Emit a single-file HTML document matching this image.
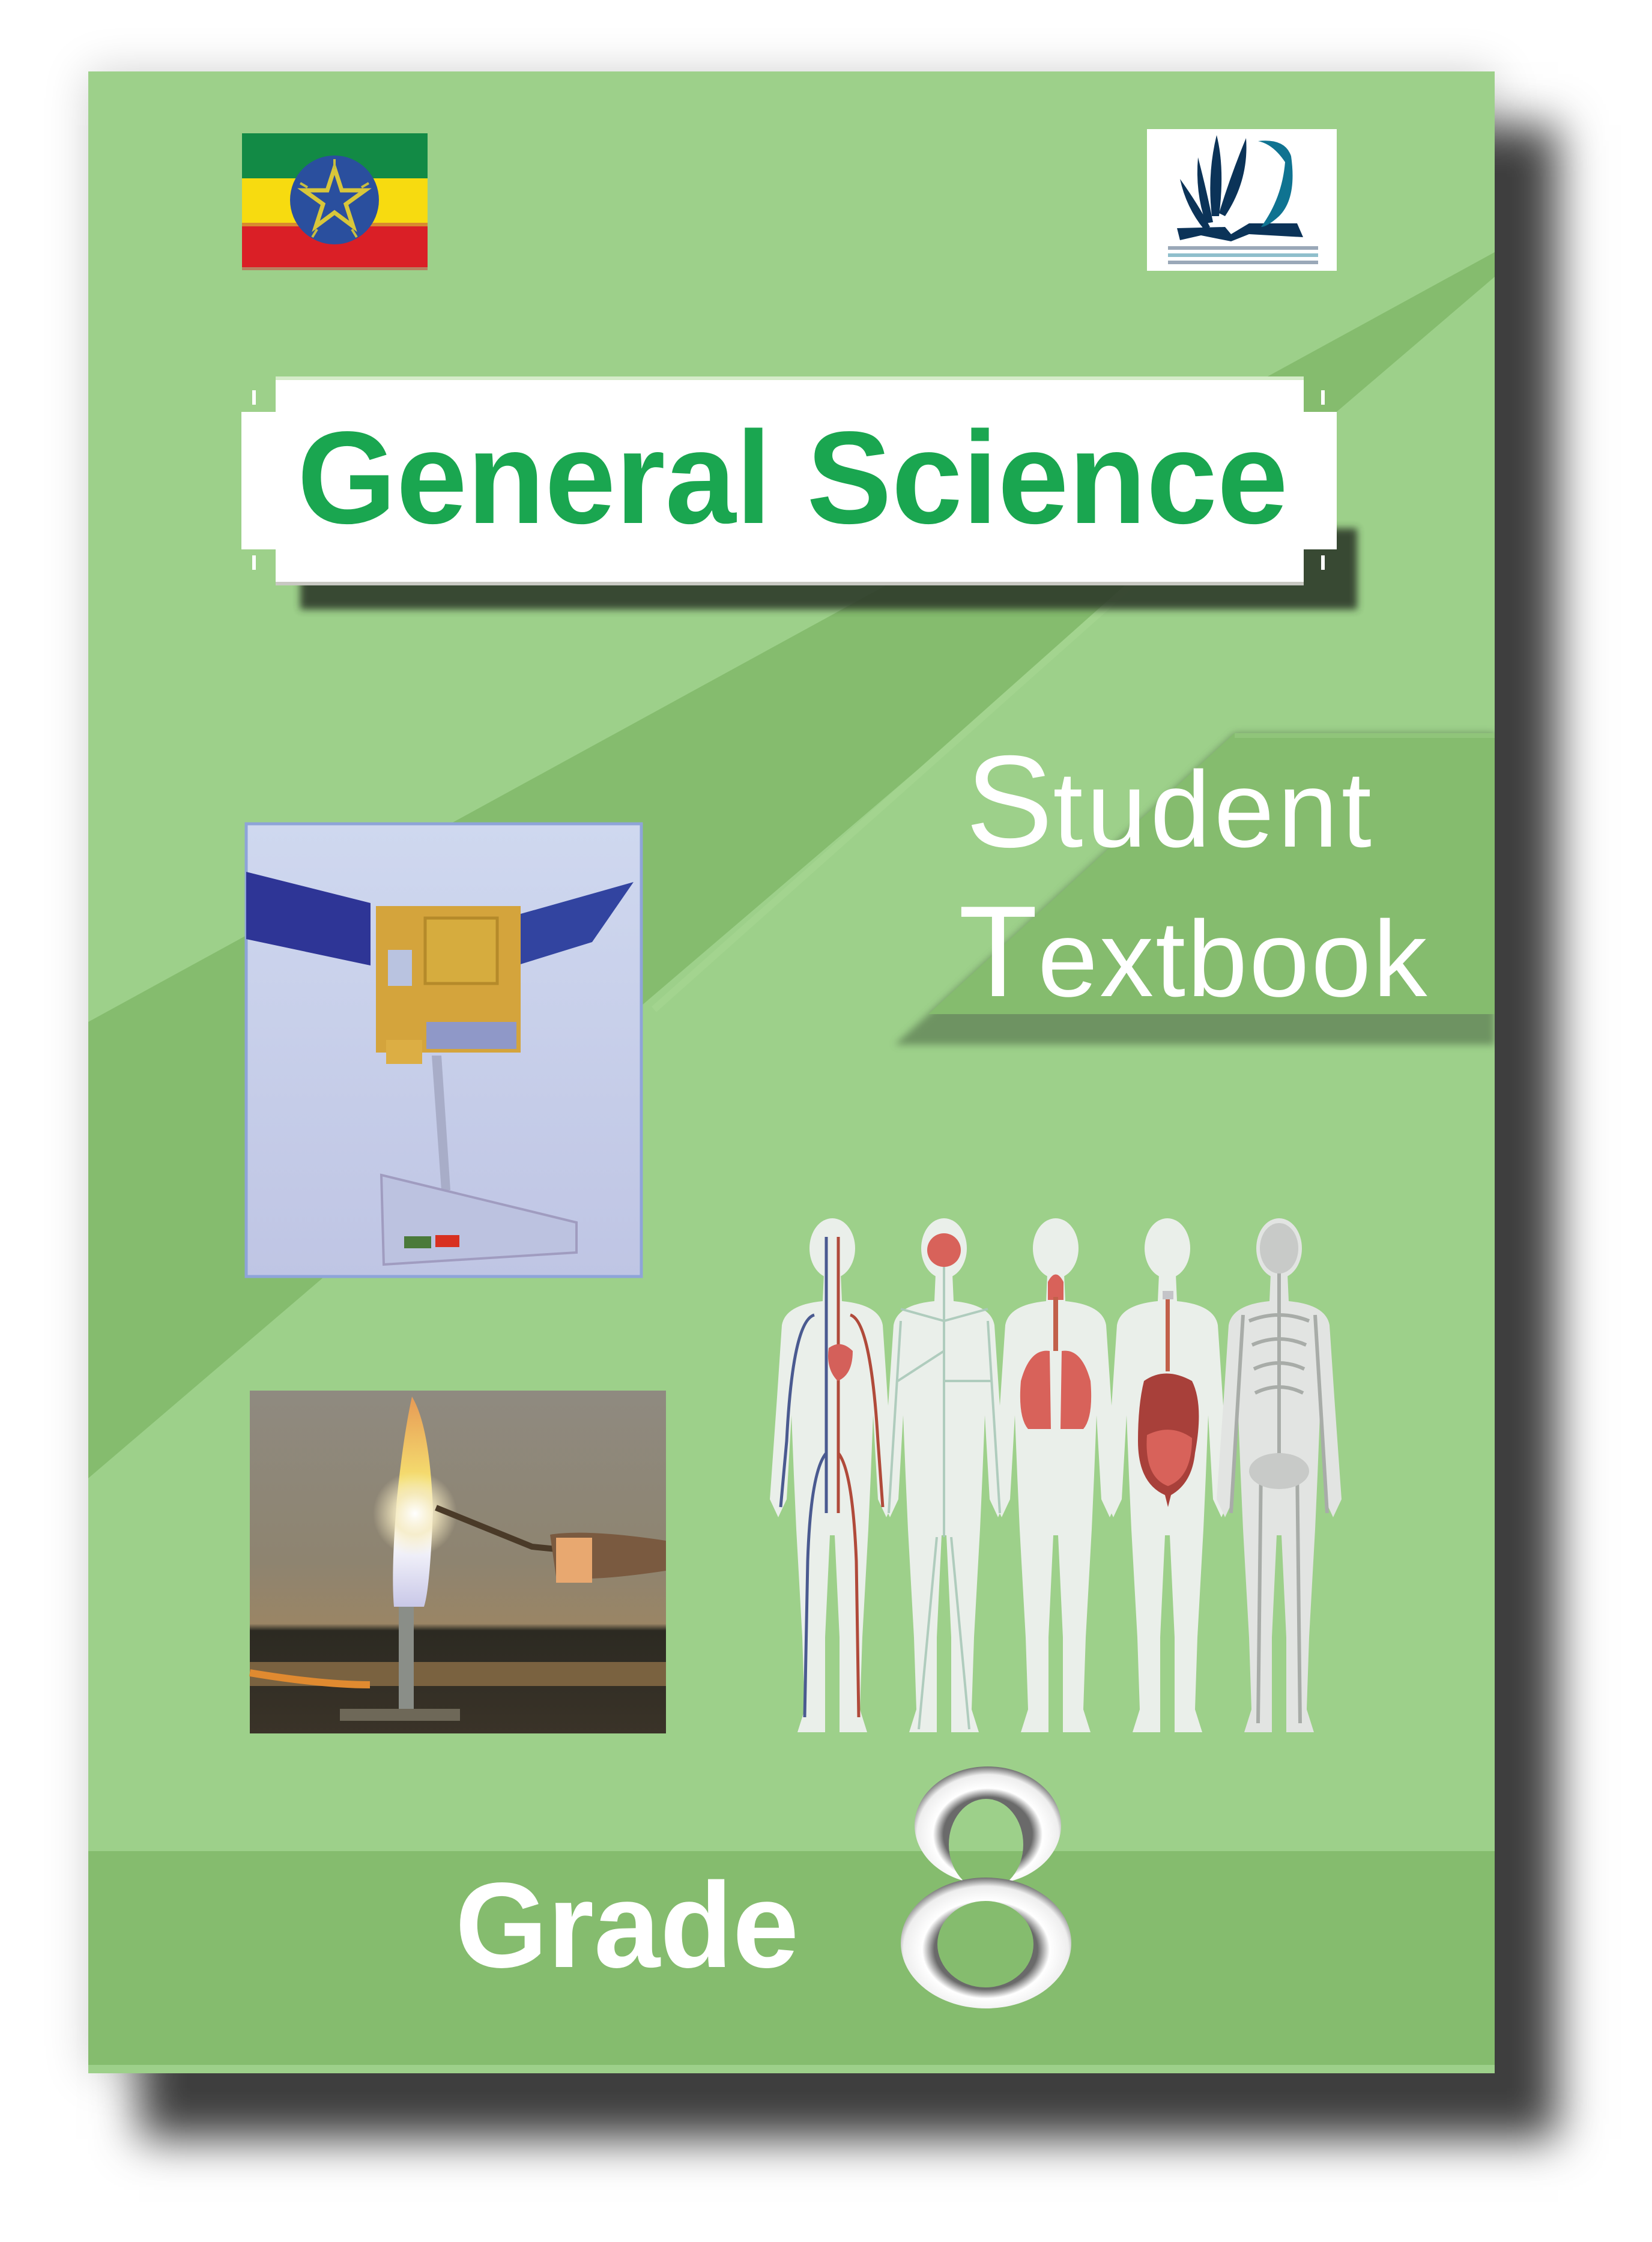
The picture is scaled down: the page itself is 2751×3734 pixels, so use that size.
<!DOCTYPE html>
<html><head><meta charset="utf-8">
<style>
html,body{margin:0;padding:0;background:#fff;}
body{width:2751px;height:3734px;position:relative;overflow:hidden;font-family:"Liberation Sans",Arial,sans-serif;}
#book{position:absolute;left:147px;top:119px;width:2342px;height:3334px;background:#9dd08a;
box-shadow:95px 100px 70px 10px #3e3e3e, 0 0 70px rgba(0,0,0,.18);overflow:hidden;}
svg{position:absolute;left:0;top:0;}
.t{position:absolute;white-space:nowrap;line-height:1;}
</style></head><body>
<div id="book">
<svg width="2342" height="3334" viewBox="147 119 2342 3334">
 <defs>
  <linearGradient id="fl" x1="0" y1="0" x2="0" y2="1">
   <stop offset="0" stop-color="#8f8a80"/><stop offset=".5" stop-color="#8e8470"/><stop offset=".68" stop-color="#9a8565"/><stop offset=".7" stop-color="#2c2a22"/><stop offset="1" stop-color="#3a3328"/>
  </linearGradient>
  <linearGradient id="sat" x1="0" y1="0" x2="0" y2="1"><stop offset="0" stop-color="#cfd8ef"/><stop offset="1" stop-color="#bfc5e4"/></linearGradient>
  <radialGradient id="glow" cx=".5" cy=".5" r=".5"><stop offset="0" stop-color="#fff"/><stop offset=".5" stop-color="#f4e9c0" stop-opacity=".8"/><stop offset="1" stop-color="#f4e9c0" stop-opacity="0"/></radialGradient>
  <linearGradient id="flame" x1="0" y1="0" x2="0" y2="1"><stop offset="0" stop-color="#e79a55"/><stop offset=".4" stop-color="#f5e070"/><stop offset=".65" stop-color="#fff"/><stop offset="1" stop-color="#c9c8e8"/></linearGradient>
  <radialGradient id="r8" cx=".5" cy=".55" r=".55"><stop offset=".55" stop-color="#6a6a6a"/><stop offset=".68" stop-color="#fff"/><stop offset=".88" stop-color="#eee"/><stop offset="1" stop-color="#707070"/></radialGradient>
  <filter id="bl"><feGaussianBlur stdDeviation="6"/></filter>
  <g id="body">
   <ellipse cx="100" cy="52" rx="38" ry="50"/>
   <path d="M86,95 L114,95 L116,140 Q178,146 184,180 L192,300 L204,470 L190,500 L176,470 L168,330 L164,430 L160,520 L150,700 L146,820 L158,858 L112,858 L112,700 L104,530 L96,530 L88,700 L88,858 L42,858 L54,820 L50,700 L40,520 L36,430 L32,330 L24,470 L10,500 L-4,470 L8,300 L16,180 Q22,146 84,140 Z"/>
  </g>
 </defs>
 <polygon points="2489,420 2489,461 147,2462 147,1702" fill="#85bc6e"/>
 <line x1="2000" y1="870" x2="1089" y2="1681" stroke="#a3d48f" stroke-width="12"/>
 <polygon points="2056,1221 2489,1221 2489,1740 1490,1740 1546,1689" fill="#5f7f55" opacity=".75" filter="url(#bl)"/>
 <polygon points="2056,1221 2489,1221 2489,1689 1546,1689" fill="#85bc6e"/>
 <rect x="2056" y="1221" width="433" height="8" fill="#90c57a"/>
 <rect x="147" y="3083" width="2342" height="356" fill="#85bc6e"/>
 <rect x="500" y="880" width="1760" height="135" fill="#2f3a2c" opacity=".9" filter="url(#bl)"/>
 <rect x="459" y="627" width="1712" height="348" fill="#fff"/>
 <rect x="402" y="686" width="1824" height="229" fill="#fff"/>
 <rect x="459" y="627" width="1712" height="6" fill="#d5ecc9"/>
 <rect x="459" y="969" width="1712" height="6" fill="#c8c8c2"/>
 <rect x="420" y="650" width="6" height="24" fill="#fff"/><rect x="2200" y="650" width="6" height="24" fill="#fff"/>
 <rect x="420" y="925" width="6" height="24" fill="#fff"/><rect x="2200" y="925" width="6" height="24" fill="#fff"/>
 <rect x="403" y="222" width="309" height="75" fill="#128a45"/>
 <rect x="403" y="297" width="309" height="74" fill="#f7db10"/>
 <rect x="403" y="371" width="309" height="6" fill="#d88a30"/>
 <rect x="403" y="377" width="309" height="68" fill="#da1f26"/>
 <rect x="403" y="445" width="309" height="5" fill="#b88060"/>
 <circle cx="557" cy="333" r="74" fill="#2a4f9e"/>
 <polygon points="557,280 569,317 608,317 576,340 588,377 557,354 526,377 538,340 506,317 545,317" fill="none" stroke="#d8c63a" stroke-width="7"/>
 <g stroke="#c8be40" stroke-width="4"><line x1="557" y1="265" x2="557" y2="282"/><line x1="500" y1="305" x2="512" y2="312"/><line x1="614" y1="305" x2="602" y2="312"/><line x1="520" y1="395" x2="528" y2="382"/><line x1="594" y1="395" x2="586" y2="382"/></g>
 <rect x="1910" y="215" width="316" height="236" fill="#fff"/>
 <g fill="#0b3358">
  <path d="M2026,225 Q2040,280 2030,360 L2018,360 Q2010,290 2026,225Z"/>
  <path d="M2075,230 Q2080,300 2040,360 L2030,355 Q2050,290 2075,230Z"/>
  <path d="M1995,262 Q2010,320 2020,370 L2008,372 Q1990,320 1995,262Z"/>
  <path d="M1965,298 Q1995,340 2015,378 L2005,382 Q1975,345 1965,298Z"/>
  <path d="M1960,380 L2040,378 L2050,390 L2080,372 L2160,372 L2170,395 L2080,390 L2050,402 L2000,392 L1965,400Z"/>
 </g>
 <path d="M2095,235 Q2140,230 2150,260 Q2160,330 2130,360 Q2110,378 2100,378 Q2135,330 2140,270 Q2120,240 2095,235Z" fill="#0f7391"/>
 <g fill="#9aa8b8"><rect x="1945" y="410" width="250" height="6"/><rect x="1945" y="422" width="250" height="6" fill="#8fbfcc"/><rect x="1945" y="434" width="250" height="6"/></g>
 <g transform="translate(410,1372)">
  <rect x="0" y="0" width="658" height="754" fill="url(#sat)" stroke="#8ea4d8" stroke-width="5"/>
  <polygon points="0,80 207,132 207,236 0,192" fill="#2e3596"/>
  <polygon points="450,152 645,97 576,197 450,236" fill="#3244a0"/>
  <rect x="216" y="137" width="241" height="244" fill="#d4a43c"/>
  <rect x="298" y="157" width="120" height="109" fill="#d6ac3e" stroke="#b58a2a" stroke-width="5"/>
  <rect x="236" y="210" width="40" height="60" fill="#b9c3e0"/>
  <rect x="300" y="330" width="150" height="45" fill="#8f98c8"/>
  <rect x="233" y="360" width="60" height="40" fill="#dcae44"/>
  <path d="M309,386 L325,610 L340,610 L325,386Z" fill="#a8adc8"/>
  <polygon points="225,585 550,664 550,714 229,734" fill="#bcc2e0" stroke="#a09cc0" stroke-width="4"/>
  <rect x="263" y="687" width="45" height="20" fill="#4a7a3a"/><rect x="315" y="685" width="40" height="20" fill="#d83020"/>
 </g>
 <g transform="translate(416,2316)">
  <rect x="0" y="0" width="693" height="571" fill="url(#fl)"/>
  <rect x="0" y="452" width="693" height="40" fill="#7a6240"/>
  <path d="M270,10 Q300,60 305,200 Q300,330 290,360 L240,360 Q235,300 245,180 Q255,80 270,10Z" fill="url(#flame)"/>
  <circle cx="275" cy="205" r="70" fill="url(#glow)"/>
  <path d="M310,195 L470,260 L520,265" stroke="#4a3a28" stroke-width="10" fill="none"/>
  <path d="M500,240 Q560,230 693,250 L693,300 Q560,320 510,310Z" fill="#7a5a40"/>
  <rect x="510" y="245" width="60" height="75" fill="#e8a870"/>
  <rect x="248" y="360" width="25" height="180" fill="#8a8e88"/>
  <path d="M0,470 Q120,490 200,490" stroke="#e08a30" stroke-width="12" fill="none"/>
  <rect x="150" y="530" width="200" height="20" fill="#6e6858"/>
 </g>
 <g fill="#eaefea">
  <use href="#body" transform="translate(1286,2027)"/>
  <use href="#body" transform="translate(1472,2027)"/>
  <use href="#body" transform="translate(1658,2027)"/>
  <use href="#body" transform="translate(1844,2027)"/>
  <use href="#body" transform="translate(2030,2027)" fill="#e2e4e2"/>
 </g>
 <g fill="none" stroke-width="5">
  <path d="M1376,2060 L1376,2520 M1356,2190 Q1320,2200 1310,2400 L1300,2510 M1376,2420 Q1350,2450 1345,2600 L1340,2860" stroke="#4a5a90"/>
  <path d="M1396,2060 L1396,2520 M1416,2190 Q1450,2200 1462,2400 L1470,2510 M1396,2420 Q1420,2450 1426,2600 L1430,2860" stroke="#b04a3a"/>
 </g>
 <path d="M1380,2245 Q1400,2230 1420,2250 Q1420,2290 1395,2300 Q1375,2280 1380,2245Z" fill="#d4605a"/>
 <circle cx="1572" cy="2082" r="28" fill="#d8625a"/>
 <g stroke="#a8c8b8" stroke-width="4" fill="none" opacity=".9">
  <path d="M1572,2110 L1572,2560 M1572,2200 L1500,2180 M1572,2250 L1495,2300 M1572,2300 L1650,2300 M1572,2200 L1645,2180 M1560,2560 L1530,2880 M1584,2560 L1614,2880 M1500,2200 L1480,2520 M1645,2200 L1665,2520"/>
 </g>
 <path d="M1745,2135 Q1758,2110 1771,2135 L1771,2165 L1745,2165Z" fill="#d8625a"/>
 <rect x="1754" y="2160" width="8" height="90" fill="#c2604a"/>
 <path d="M1748,2250 Q1715,2245 1700,2300 Q1695,2360 1712,2380 L1750,2380Z" fill="#d8625a"/>
 <path d="M1768,2250 Q1801,2245 1816,2300 Q1821,2360 1804,2380 L1766,2380Z" fill="#d8625a"/>
 <rect x="1936" y="2150" width="18" height="14" fill="#c4c4c8"/>
 <rect x="1941" y="2164" width="7" height="120" fill="#c2604a"/>
 <path d="M1905,2300 Q1940,2275 1985,2300 Q2005,2340 1990,2420 Q1985,2470 1950,2490 L1945,2510 L1940,2490 Q1895,2470 1895,2400 Q1895,2340 1905,2300Z" fill="#a8403a"/>
 <path d="M1910,2390 Q1950,2370 1985,2395 Q1985,2460 1945,2475 Q1905,2460 1910,2390Z" fill="#d8625a"/>
 <g stroke="#a8aca8" stroke-width="6" fill="none">
  <path d="M2130,2100 L2130,2440 M2080,2200 Q2130,2180 2180,2200 M2085,2240 Q2130,2220 2175,2240 M2088,2280 Q2130,2260 2172,2280 M2090,2320 Q2130,2300 2170,2320 M2100,2440 L2095,2870 M2160,2440 L2165,2870 M2070,2190 L2050,2520 M2190,2190 L2210,2520"/>
 </g>
 <ellipse cx="2130" cy="2079" rx="32" ry="42" fill="#c8cac8"/>
 <ellipse cx="2130" cy="2450" rx="50" ry="30" fill="#c8cac8"/>
 <!-- 8 -->
 <path fill-rule="evenodd" fill="url(#r8)" d="M1523,3040 a122,98 0 1,0 244,0 a122,98 0 1,0 -244,0Z M1580,3072 a62,76 0 1,0 124,0 a62,76 0 1,0 -124,0Z"/>
 <path fill-rule="evenodd" fill="url(#r8)" d="M1500,3236 a142,109 0 1,0 284,0 a142,109 0 1,0 -284,0Z M1561,3238 a80,72 0 1,0 160,0 a80,72 0 1,0 -160,0Z"/>
 <rect x="147" y="3439" width="2342" height="14" fill="#9dd08a"/>
</svg>
<div class="t" style="left:348px;top:568px;font-size:219px;font-weight:bold;color:#1aa650;transform:scaleX(0.968);transform-origin:0 0;">General Science</div>
<div class="t" style="left:1461px;top:1108px;color:#fff;"><span style="font-size:218px;">S</span><span style="font-size:180px;letter-spacing:6px;">tudent</span></div>
<div class="t" style="left:1449px;top:1357px;color:#fff;"><span style="font-size:216px;">T</span><span style="font-size:180px;letter-spacing:3px;">extbook</span></div>
<div class="t" style="left:611px;top:2986px;color:#fff;font-size:202px;font-weight:bold;transform:scaleX(0.98);transform-origin:0 0;">Grade</div>
</div>
</body></html>
